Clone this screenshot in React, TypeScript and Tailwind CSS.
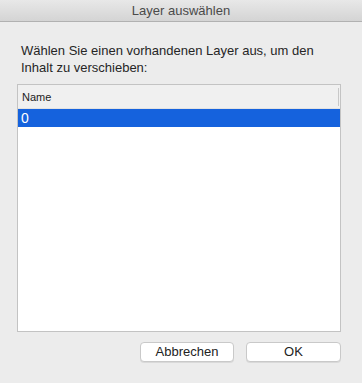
import React from 'react';

const App = () => {
  return (
    <div
      className="w-[362px] h-[383px] bg-[#ececec] flex flex-col overflow-hidden text-[#1f1f1f]"
      style={{ fontFamily: '"Liberation Sans", Arial, sans-serif' }}
    >
      {/* Titelleiste */}
      <div className="h-[22px] shrink-0 flex items-center justify-center bg-gradient-to-b from-[#e8e8e8] to-[#d4d4d4] border-b border-[#b1b1b1]">
        <span className="text-[13px] text-[#4a4a4a]">Layer auswählen</span>
      </div>

      <div className="flex flex-col flex-1 pl-[17px] pr-[21px] pt-[20px]">
        <p className="pl-[4px] text-[13px] leading-[17px] text-[#262626]">
          Wählen Sie einen vorhandenen Layer aus, um den
          <br />
          Inhalt zu verschieben:
        </p>

        {/* Liste */}
        <div className="mt-[8px] h-[248px] border border-[#c3c3c3] bg-white flex flex-col">
          <div className="h-[24px] bg-[#f0f0f0] border-b border-[#e2e2e2] flex items-center pl-[4px] pr-[1px]">
            <span className="text-[11px] text-[#222] flex-1 pt-[1px]">Name</span>
            <div className="w-[1px] h-[18px] bg-[#c8c8c8]" />
          </div>
          <div className="h-[18px] bg-[#1562dd] flex items-center pl-[3px]">
            <span className="text-[14px] text-white">0</span>
          </div>
        </div>

        {/* Buttons */}
        <div className="mt-[10px] flex justify-end gap-[12px]">
          <button className="w-[94px] h-[20px] bg-white rounded-[4px] border border-[#c9c9c9] shadow-[0_1px_0_rgba(0,0,0,0.08)] text-[13px] text-[#222] flex items-center justify-center">
            Abbrechen
          </button>
          <button className="w-[95px] h-[20px] bg-white rounded-[4px] border border-[#c9c9c9] shadow-[0_1px_0_rgba(0,0,0,0.08)] text-[13px] text-[#222] flex items-center justify-center">
            OK
          </button>
        </div>
      </div>
    </div>
  );
};

export default App;
